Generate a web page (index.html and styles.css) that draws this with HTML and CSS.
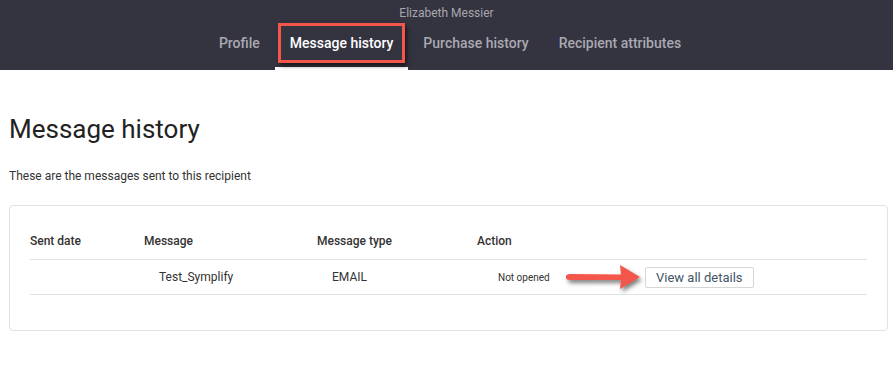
FILE: index.html
```html
<!DOCTYPE html>
<html lang="en">
<head>
    <meta charset="UTF-8">
    <meta name="viewport" content="width=device-width, initial-scale=1.0">
    <title>Message history - Elizabeth Messier</title>
    <link rel="stylesheet" href="styles.css">
</head>
<body>
    <header class="topbar">
        <div class="topbar__name">Elizabeth Messier</div>
        <nav class="tabs">
            <a href="#" class="tabs__item">Profile</a>
            <a href="#" class="tabs__item tabs__item--active">
                <span class="highlight-box">Message history</span>
            </a>
            <a href="#" class="tabs__item">Purchase history</a>
            <a href="#" class="tabs__item">Recipient attributes</a>
        </nav>
    </header>

    <main class="page">
        <h1 class="page__title">Message history</h1>
        <p class="page__intro">These are the messages sent to this recipient</p>

        <div class="card">
            <table class="history">
                <thead>
                    <tr>
                        <th class="col-date">Sent date</th>
                        <th class="col-msg">Message</th>
                        <th class="col-type">Message type</th>
                        <th class="col-action">Action</th>
                    </tr>
                </thead>
                <tbody>
                    <tr>
                        <td></td>
                        <td class="cell-indent">Test_Symplify</td>
                        <td class="cell-indent">EMAIL</td>
                        <td>
                            <div class="action-row">
                                <span class="status">Not opened</span>
                                <span class="arrow-slot">
                                    <svg class="callout-arrow" width="80" height="30" viewBox="0 0 80 30" aria-hidden="true">
                                        <path d="M3 14.5 Q3 12 7 12 L58 12.5 L57 3 L77 15 L57 27 L58 18 L7 18 Q3 18 3 15.5 Z" fill="#f4564b"/>
                                    </svg>
                                </span>
                                <button class="btn-details">View all details</button>
                            </div>
                        </td>
                    </tr>
                </tbody>
            </table>
        </div>
    </main>
</body>
</html>
```

FILE: styles.css
```css
:root {
    --bar: #343340;
    --bar-text: #a9a9b1;
    --coral: #f4564b;
    --text: #333333;
    --line: #e2e2e2;
    --font-base: Roboto, "Liberation Sans", sans-serif;
}

* {
    box-sizing: border-box;
}

body {
    margin: 0;
    font-family: var(--font-base);
    color: var(--text);
    background: #ffffff;
}

/* Barra superior */
.topbar {
    background: var(--bar);
    height: 70px;
    text-align: center;
}

.topbar__name {
    padding-top: 6px;
    font-size: 12px;
    line-height: 15px;
    color: #a7a7ad;
}

.tabs {
    display: flex;
    justify-content: center;
    margin-top: 2px;
    margin-left: 7px;
}

.tabs__item {
    display: flex;
    align-items: flex-start;
    height: 47px;
    padding: 12px 15px 0;
    font-size: 14px;
    line-height: 17px;
    font-weight: 500;
    color: var(--bar-text);
    text-decoration: none;
}

.tabs__item--active {
    color: #ffffff;
    border-bottom: 3px solid #ffffff;
    padding: 0 3px;
}

.highlight-box {
    display: block;
    padding: 9px 9px 8px;
    border: 3px solid var(--coral);
    box-shadow: 2px 3px 4px rgba(0, 0, 0, 0.55);
}

/* Contenido */
.page {
    padding: 0 5px 0 9px;
}

.page__title {
    margin: 42px 0 0;
    font-size: 26px;
    font-weight: 400;
    line-height: 34px;
    color: #222222;
}

.page__intro {
    margin: 23px 0 0;
    font-size: 12px;
    color: #333333;
}

.card {
    margin-top: 22px;
    border: 1px solid var(--line);
    border-radius: 4px;
    padding: 22px 20px 35px 20px;
}

.history {
    width: 100%;
    border-collapse: collapse;
    font-size: 12px;
}

.history th {
    text-align: left;
    font-weight: 500;
    padding: 6px 0 11px;
    border-bottom: 1px solid var(--line);
}

.history td {
    padding: 0;
    border-bottom: 1px solid var(--line);
    height: 35px;
}

.col-date { width: 114px; }
.col-msg { width: 173px; }
.col-type { width: 160px; }

.history .cell-indent {
    padding-left: 15px;
}

.action-row {
    display: flex;
    align-items: center;
}

.status {
    font-size: 10px;
    margin-left: 21px;
    width: 66px;
}

.arrow-slot {
    position: relative;
    width: 81px;
    height: 20px;
}

.callout-arrow {
    position: absolute;
    left: -1px;
    top: -5px;
    filter: drop-shadow(2px 3px 2px rgba(0, 0, 0, 0.5));
}

.btn-details {
    font-family: var(--font-base);
    font-size: 13px;
    color: #3f5566;
    background: #ffffff;
    border: 1px solid #d6d6d6;
    border-radius: 2px;
    padding: 1px 10px;
    height: 21px;
}
```
